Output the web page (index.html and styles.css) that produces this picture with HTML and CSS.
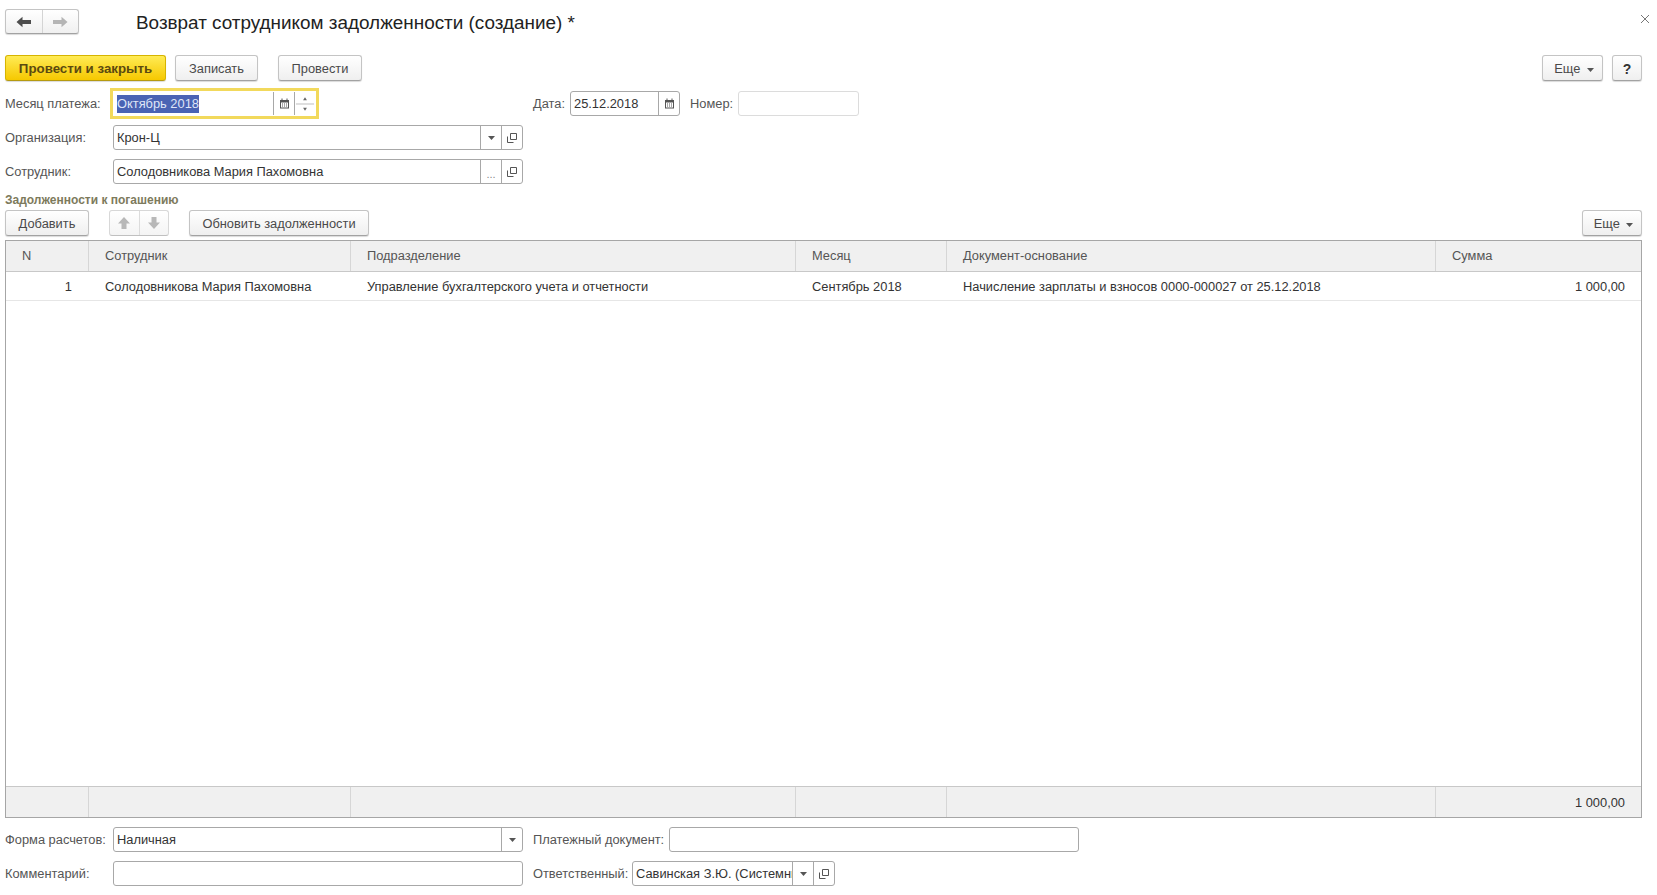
FILE: index.html
```html
<!DOCTYPE html>
<html lang="ru">
<head>
<meta charset="utf-8">
<title>Возврат сотрудником задолженности (создание)</title>
<link rel="stylesheet" href="styles.css">
</head>
<body>
<div class="page">
  <header class="titlebar">
    <div class="nav">
      <span class="nav-cell nav-back"><svg width="16" height="12" viewBox="0 0 16 12"><path d="M0.5 6 6.5 0.8V4H15V8H6.5V11.2Z" fill="#4d4d4d"/></svg></span>
      <span class="nav-cell"><svg width="16" height="12" viewBox="0 0 16 12"><path d="M15.5 6 9.5 0.8V4H1V8H9.5V11.2Z" fill="#b5b5b5"/></svg></span>
    </div>
    <h1 class="title">Возврат сотрудником задолженности (создание) *</h1>
    <span class="close"><svg width="10" height="10" viewBox="0 0 10 10"><path d="M1 1 9 9M9 1 1 9" stroke="#777" stroke-width="1" fill="none"/></svg></span>
  </header>

  <div class="commands">
    <button class="btn btn-primary btn-post-close">Провести и закрыть</button>
    <button class="btn btn-write">Записать</button>
    <button class="btn btn-post">Провести</button>
    <button class="btn btn-more btn-push">Еще <svg class="caret" width="7" height="4" viewBox="0 0 7 4"><path d="M0 0H7L3.5 4Z" fill="#555"/></svg></button>
    <button class="btn btn-help">?</button>
  </div>

  <div class="row row-first">
    <label class="label label-main">Месяц платежа:</label>
    <div class="field field-focus">
      <span class="value"><span class="selected">Октябрь 2018</span></span>
      <span class="cell"><svg width="11" height="11" viewBox="0 0 11 11"><path d="M1 2H2.500V0.500H3.500V2H7.500V0.500H8.500V2H10V10.500H1Z" fill="#555"/><path d="M2 4.500H9V9.500H2Z" fill="#fff"/><path d="M3 5.500H4V6.500H3ZM5 5.500H6V6.500H5ZM7 5.500H8V6.500H7ZM3 7.500H4V8.500H3ZM5 7.500H6V8.500H5ZM7 7.500H8V8.500H7Z" fill="#555"/></svg></span>
      <span class="cell spin"><svg width="21" height="22" viewBox="0 0 21 22"><path d="M10.500 4 12.500 7H8.500Z" fill="#666"/><path d="M1 11H20" stroke="#bbb"/><path d="M10.500 18 12.500 15H8.500Z" fill="#666"/></svg></span>
    </div>
    <label class="label label-date">Дата:</label>
    <div class="field field-date">
      <span class="value">25.12.2018</span>
      <span class="cell"><svg width="11" height="11" viewBox="0 0 11 11"><path d="M1 2H2.500V0.500H3.500V2H7.500V0.500H8.500V2H10V10.500H1Z" fill="#555"/><path d="M2 4.500H9V9.500H2Z" fill="#fff"/><path d="M3 5.500H4V6.500H3ZM5 5.500H6V6.500H5ZM7 5.500H8V6.500H7ZM3 7.500H4V8.500H3ZM5 7.500H6V8.500H5ZM7 7.500H8V8.500H7Z" fill="#555"/></svg></span>
    </div>
    <label class="label label-number">Номер:</label>
    <div class="field field-number"></div>
  </div>

  <div class="row row-org">
    <label class="label label-main">Организация:</label>
    <div class="field field-wide">
      <span class="value">Крон-Ц</span>
      <span class="cell"><svg width="7" height="4" viewBox="0 0 7 4"><path d="M0 0H7L3.500 4Z" fill="#555"/></svg></span>
      <span class="cell"><svg width="10" height="10" viewBox="0 0 10 10"><path d="M3.500 0.500H9.500V6.500H3.500Z M0.500 3.500V9.500H6.500" fill="none" stroke="#555"/></svg></span>
    </div>
  </div>

  <div class="row row-emp">
    <label class="label label-main">Сотрудник:</label>
    <div class="field field-wide">
      <span class="value">Солодовникова Мария Пахомовна</span>
      <span class="cell cell-dots">...</span>
      <span class="cell"><svg width="10" height="10" viewBox="0 0 10 10"><path d="M3.500 0.500H9.500V6.500H3.500Z M0.500 3.500V9.500H6.500" fill="none" stroke="#555"/></svg></span>
    </div>
  </div>

  <div class="section-title">Задолженности к погашению</div>

  <div class="toolbar">
    <button class="btn btn-add">Добавить</button>
    <div class="arrows">
      <span class="arrow-cell"><svg width="14" height="14" viewBox="0 0 14 14"><path d="M7 1 13 7.500H9.500V13H4.500V7.500H1Z" fill="#b8b8b8"/></svg></span>
      <span class="arrow-cell"><svg width="14" height="14" viewBox="0 0 14 14"><path d="M7 13 13 6.500H9.500V1H4.500V6.500H1Z" fill="#b8b8b8"/></svg></span>
    </div>
    <button class="btn btn-refresh">Обновить задолженности</button>
    <button class="btn btn-more-table btn-push">Еще <svg class="caret" width="7" height="4" viewBox="0 0 7 4"><path d="M0 0H7L3.500 4Z" fill="#555"/></svg></button>
  </div>

  <div class="table">
    <div class="grid-row head">
      <div class="th">N</div>
      <div class="th">Сотрудник</div>
      <div class="th">Подразделение</div>
      <div class="th">Месяц</div>
      <div class="th">Документ-основание</div>
      <div class="th">Сумма</div>
    </div>
    <div class="grid-row data">
      <div class="td td-num">1</div>
      <div class="td">Солодовникова Мария Пахомовна</div>
      <div class="td">Управление бухгалтерского учета и отчетности</div>
      <div class="td">Сентябрь 2018</div>
      <div class="td">Начисление зарплаты и взносов 0000-000027 от 25.12.2018</div>
      <div class="td td-sum">1 000,00</div>
    </div>
    <div class="spacer"></div>
    <div class="grid-row foot">
      <div class="tf"></div>
      <div class="tf"></div>
      <div class="tf"></div>
      <div class="tf"></div>
      <div class="tf"></div>
      <div class="tf td-sum">1 000,00</div>
    </div>
  </div>

  <div class="row row-pay">
    <label class="label label-main">Форма расчетов:</label>
    <div class="field field-wide">
      <span class="value">Наличная</span>
      <span class="cell"><svg width="7" height="4" viewBox="0 0 7 4"><path d="M0 0H7L3.500 4Z" fill="#555"/></svg></span>
    </div>
    <label class="label label-paydoc">Платежный документ:</label>
    <div class="field field-paydoc"></div>
  </div>

  <div class="row row-comment">
    <label class="label label-main">Комментарий:</label>
    <div class="field field-wide"></div>
    <label class="label label-resp">Ответственный:</label>
    <div class="field field-resp">
      <span class="value value-clip">Савинская З.Ю. (Системный)</span>
      <span class="cell"><svg width="7" height="4" viewBox="0 0 7 4"><path d="M0 0H7L3.500 4Z" fill="#555"/></svg></span>
      <span class="cell"><svg width="10" height="10" viewBox="0 0 10 10"><path d="M3.500 0.500H9.500V6.500H3.500Z M0.500 3.500V9.500H6.500" fill="none" stroke="#555"/></svg></span>
    </div>
  </div>
</div>
</body>
</html>
```

FILE: styles.css
```css
* { box-sizing: border-box; }
html, body { margin: 0; padding: 0; background: #fff; }
body {
  font-family: "Liberation Sans", Arial, sans-serif;
  font-size: 12.85px;
  color: #333;
  overflow: hidden;
}
.page { width: 1657px; height: 895px; padding: 0 15px 0 5px; }

.titlebar { display: flex; align-items: flex-start; height: 55px; padding-top: 9px; }
.nav {
  display: flex; width: 74px; height: 25px;
  border: 1px solid #c4c4c4; border-bottom-color: #a2a2a2; border-radius: 3px;
  background: linear-gradient(#fff, #f0f0f0);
  box-shadow: 0 1px 1px rgba(0,0,0,.15);
}
.nav-cell { flex: 1; display: flex; align-items: center; justify-content: center; }
.nav-back { border-right: 1px solid #d4d4d4; }
.title {
  margin: 2px 0 0 57px;
  font-size: 18.9px; font-weight: 400; line-height: 24px; color: #222;
}
.close { margin: 5px -8px 0 auto; display: flex; }

.btn {
  height: 26px; padding: 1px 0 0;
  font: inherit; color: #4a4a4a;
  border: 1px solid #c4c4c4; border-bottom-color: #a2a2a2; border-radius: 3px;
  background: linear-gradient(#fff, #efefef);
  box-shadow: 0 1px 1px rgba(0,0,0,.15);
}
.btn-primary {
  font-weight: 700; font-size: 13.3px; color: #5b4a10;
  border-color: #d6b400 #d6b400 #b59a10;
  background: linear-gradient(#ffeb55, #f6c800);
}
.commands { display: flex; height: 26px; }
.btn-post-close { width: 161px; }
.btn-write { width: 83px; margin-left: 9px; }
.btn-post { width: 84px; margin-left: 20px; }
.btn-push { margin-left: auto; }
.btn-more { width: 61px; padding-left: 3px; }
.btn-help { width: 30px; margin-left: 9px; font-weight: 700; font-size: 14px; color: #333; }
.caret { margin-left: 3px; vertical-align: 1px; }

.row { display: flex; align-items: center; height: 25px; }
.row-first { margin-top: 10px; }
.row-org { margin-top: 9px; }
.row-emp { margin-top: 9px; }
.row-pay { margin-top: 9px; }
.row-comment { margin-top: 9px; }

.label { color: #555; white-space: nowrap; }
.label-main { width: 108px; flex: none; }
.label-date { margin-left: 217px; width: 37px; }
.label-number { margin-left: 10px; width: 48px; }
.label-paydoc, .label-resp { margin-left: 10px; }
.label-paydoc { width: 136px; }
.label-resp { width: 99px; }

.field {
  display: flex; height: 25px; flex: none;
  border: 1px solid #a8a8a8; border-radius: 3px; background: #fff;
}
.field-focus { width: 203px; box-shadow: 0 0 0 3px #f2d95c; border-color: #fff; border-radius: 0; }
.field-date { width: 110px; }
.field-number { width: 121px; border-color: #dcdcdc; }
.field-wide { width: 410px; }
.field-paydoc { width: 410px; }
.field-resp { width: 203px; }
.value {
  flex: 1; min-width: 0; padding-left: 3px;
  line-height: 23px; color: #333; white-space: nowrap; overflow: hidden;
}
.selected { background: #4a63b4; color: #dfe5f7; display: inline-block; line-height: 18px; }
.cell {
  flex: none; width: 21px;
  display: flex; align-items: center; justify-content: center;
  border-left: 1px solid #a8a8a8;
}
.cell-dots { color: #888; font-size: 11px; padding-top: 4px; }
.spin { padding: 0; }

.section-title {
  height: 26px; padding-top: 8px;
  line-height: 16px;
  font-size: 12px; font-weight: 700; color: #7d7a5c;
}
.toolbar { display: flex; height: 26px; margin-bottom: 4px; }
.btn-add { width: 84px; }
.arrows {
  display: flex; width: 60px; margin-left: 20px;
  border: 1px solid #d8d8d8; border-bottom-color: #c0c0c0; border-radius: 3px;
  background: linear-gradient(#fff, #f4f4f4);
}
.arrow-cell { flex: 1; display: flex; align-items: center; justify-content: center; }
.arrow-cell + .arrow-cell { border-left: 1px solid #dcdcdc; }
.btn-refresh { width: 180px; margin-left: 20px; }
.btn-more-table { width: 60px; padding-left: 3px; }

.table {
  display: flex; flex-direction: column;
  height: 578px; border: 1px solid #a6a6a6;
}
.grid-row { display: grid; grid-template-columns: 82px 262px 445px 151px 489px 1fr; }
.head { height: 31px; background: #f0f0f0; border-bottom: 1px solid #c8c8c8; }
.th { padding-left: 16px; line-height: 30px; color: #555; border-left: 1px solid #d6d6d6; }
.th:first-child { border-left: 0; }
.data { height: 29px; border-bottom: 1px solid #e6e6e6; }
.td { padding: 1px 0 0 17px; line-height: 28px; color: #333; white-space: nowrap; }
.td-num, .td-sum { padding: 1px 16px 0 0; text-align: right; }
.spacer { flex: 1; }
.foot { height: 31px; background: #f0f0f0; border-top: 1px solid #c8c8c8; }
.tf { line-height: 29px; border-left: 1px solid #d6d6d6; color: #333; }
.tf:first-child { border-left: 0; }
```
